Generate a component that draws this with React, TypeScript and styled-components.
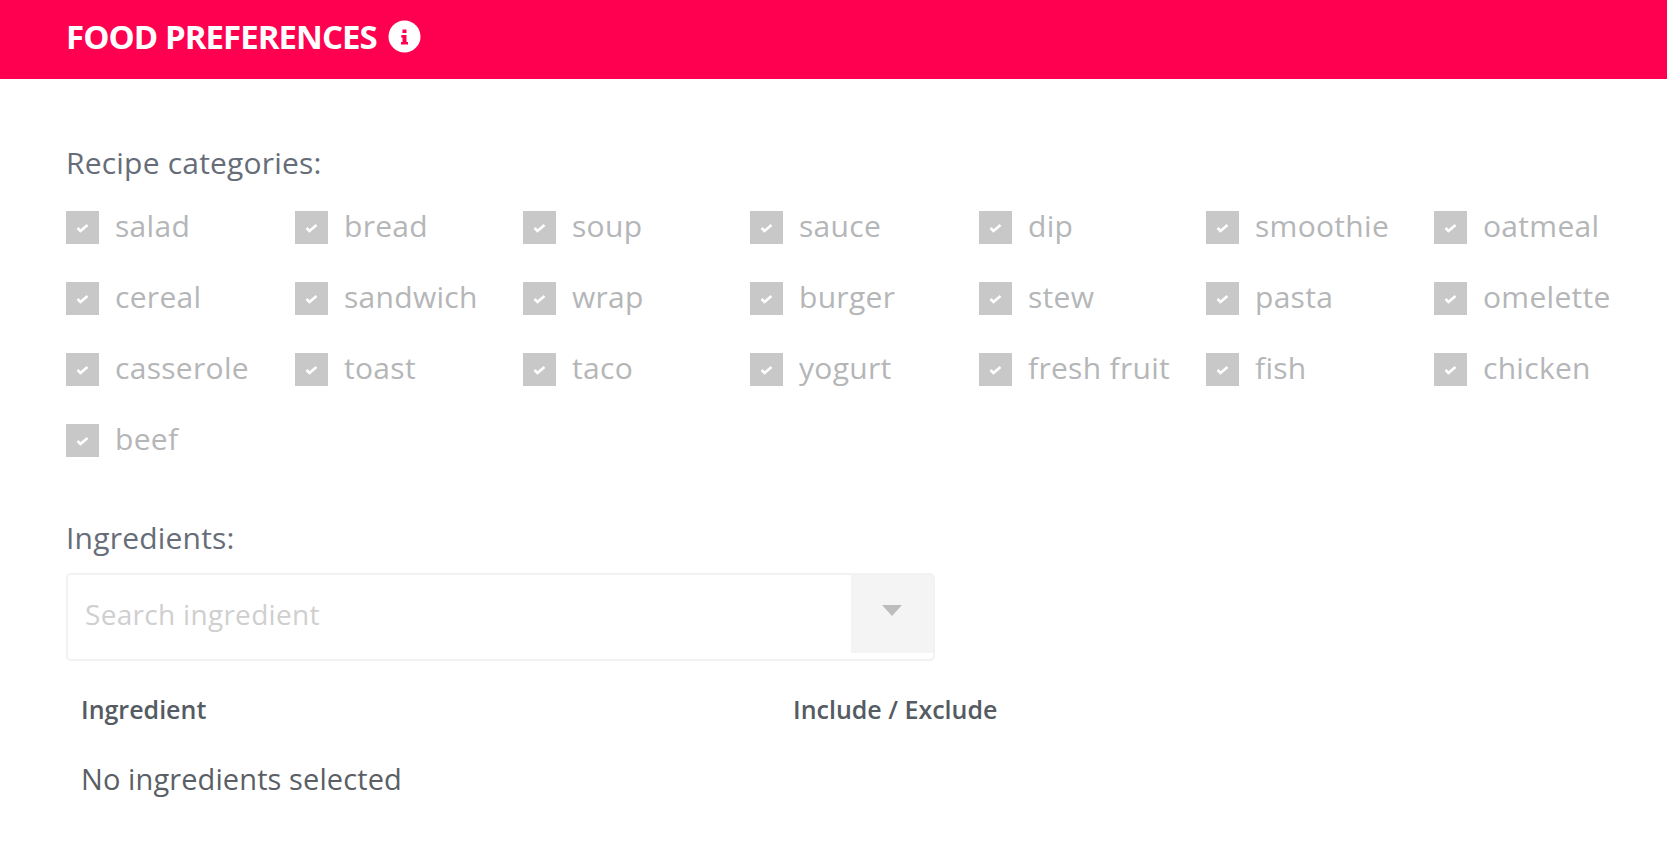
import React from "react";
import styled, { createGlobalStyle } from "styled-components";

const Global = createGlobalStyle`
  html, body { margin: 0; padding: 0; background: #fff; }
  body { font-family: "Open Sans", "Liberation Sans", sans-serif; }
`;
const Page = styled.div`
  width: 1667px;
  height: 856px;
  overflow: hidden;
  background: #fff;
`;
const Header = styled.header`
  height: 79px;
  background: #ff0050;
  display: flex;
  align-items: center;
  gap: 11px;
  padding: 0 0 6px 66px;
  box-sizing: border-box;
`;
const Title = styled.h1`
  margin: 0;
  color: #fff;
  font-size: 33px;
  line-height: 36px;
  font-weight: 700;
  letter-spacing: -0.95px;
`;
const InfoIcon = styled.svg`
  width: 33px;
  height: 33px;
  display: block;
`;
const Content = styled.main`
  padding: 0 0 0 66px;
`;
const SectionLabel = styled.div`
  color: #666d78;
  font-size: 30px;
  line-height: 38px;
  letter-spacing: 0.2px;
`;
const RecipeLabel = styled(SectionLabel)`
  padding-top: 65px;
`;
const CategoryGrid = styled.div`
  display: grid;
  grid-template-columns: 229px 228px 227px 229px 227px 228px 200px;
  grid-auto-rows: 71px;
  margin-top: 29px;
`;
const Category = styled.label`
  display: flex;
  align-items: flex-start;
  gap: 16px;
  color: #b4b6b8;
  font-size: 30px;
  line-height: 29px;
  white-space: nowrap;
  letter-spacing: 0.3px;
`;
const Box = styled.span`
  width: 33px;
  height: 33px;
  background: #c8c8c8;
  display: flex;
  align-items: center;
  justify-content: center;
  flex: none;
`;
const CheckMark = styled.svg`
  width: 13px;
  height: 10px;
`;
const IngredientLabel = styled(SectionLabel)`
  margin-top: 24px;
`;
const Select = styled.div`
  width: 869px;
  height: 88px;
  margin-top: 16px;
  box-sizing: border-box;
  border: 2px solid #f2f2f2;
  border-radius: 5px;
  display: flex;
  align-items: flex-start;
`;
const SearchText = styled.div`
  flex: 1;
  color: #cfcfcf;
  font-size: 28px;
  line-height: 38px;
  padding: 20px 0 0 17px;
  letter-spacing: 0.3px;
`;
const ArrowButton = styled.div`
  width: 82px;
  height: 78px;
  background: #f4f4f4;
  display: flex;
  align-items: center;
  justify-content: center;
`;
const ArrowIcon = styled.svg`
  width: 20px;
  height: 11px;
  margin-top: -7px;
`;
const TableHead = styled.div`
  display: grid;
  grid-template-columns: 712px auto;
  padding: 32px 0 0 15px;
  color: #555b63;
  font-size: 25px;
  line-height: 32px;
  font-weight: 600;
  letter-spacing: 0;
`;
const EmptyRow = styled.div`
  padding: 35px 0 0 15px;
  color: #5a5f66;
  font-size: 29px;
  line-height: 38px;
  letter-spacing: 0.1px;
`;

const categories = [
  "salad", "bread", "soup", "sauce", "dip", "smoothie", "oatmeal",
  "cereal", "sandwich", "wrap", "burger", "stew", "pasta", "omelette",
  "casserole", "toast", "taco", "yogurt", "fresh fruit", "fish", "chicken",
  "beef",
];

export default function App() {
  return (
    <Page>
      <Global />
      <Header>
        <Title>FOOD PREFERENCES</Title>
        <InfoIcon viewBox="0 0 33 33">
          <circle cx="16.5" cy="16.5" r="16" fill="#fff" />
          <path d="M14.5 9.5h4v3.5h-4zM13.5 15h5v7h1.5v2.5h-7V22h1.5v-4.5h-1.5z" fill="#ff0050" />
        </InfoIcon>
      </Header>
      <Content>
        <RecipeLabel>Recipe categories:</RecipeLabel>
        <CategoryGrid>
          {categories.map((c) => (
            <Category key={c}>
              <Box>
                <CheckMark viewBox="0 0 13 10">
                  <path d="M1.5 5l3 3 7-6" fill="none" stroke="#fff" strokeWidth="2.6" />
                </CheckMark>
              </Box>
              {c}
            </Category>
          ))}
        </CategoryGrid>
        <IngredientLabel>Ingredients:</IngredientLabel>
        <Select>
          <SearchText>Search ingredient</SearchText>
          <ArrowButton>
            <ArrowIcon viewBox="0 0 20 11">
              <path d="M0 0h20l-10 11z" fill="#bdbdbd" />
            </ArrowIcon>
          </ArrowButton>
        </Select>
        <TableHead>
          <span>Ingredient</span>
          <span>Include / Exclude</span>
        </TableHead>
        <EmptyRow>No ingredients selected</EmptyRow>
      </Content>
    </Page>
  );
}
